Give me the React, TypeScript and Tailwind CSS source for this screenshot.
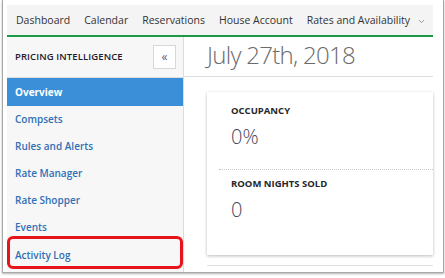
import React from 'react';
import { ChevronDown } from 'lucide-react';

const NAV = ['Dashboard', 'Calendar', 'Reservations', 'House Account'];
const MENU = ['Compsets', 'Rules and Alerts', 'Rate Manager', 'Rate Shopper', 'Events'];

const Stat: React.FC<{ label: string; value: string; dotted?: boolean }> = ({ label, value, dotted }) => (
  <div className={`ml-[12px] pl-[12px] h-[77px] ${dotted ? 'border-t border-dotted border-[#c8c8c8]' : ''}`}>
    <div className={`${dotted ? 'pt-[7px]' : 'pt-[12px]'} text-[9.5px] font-bold text-[#262626] leading-[14px]`}>{label}</div>
    <div className="mt-[6px] text-[20px] font-light text-[#48465a] leading-[26px]">{value}</div>
  </div>
);

const App: React.FC = () => {
  return (
    <div className="w-[445px] h-[278px] bg-white overflow-hidden font-['Open_Sans',sans-serif]">
      <div className="ml-[2px] w-[442px] h-[273px] border-l border-r border-b border-[#a8a8a8] shadow-[0_1px_2px_rgba(0,0,0,0.3)] pt-[5px] pl-[4px] pr-[10px] flex flex-col overflow-hidden">
        {/* top nav */}
        <div className="h-[32px] bg-[#f4f4f4] border-b-[2px] border-[#1d9a48] flex items-center pl-[9px] pt-[2px] gap-[14px] text-[10.5px] text-[#333] whitespace-nowrap shrink-0">
          {NAV.map((n) => (
            <span key={n}>{n}</span>
          ))}
          <span className="flex items-center gap-[7px]">
            Rates and Availability
            <ChevronDown className="w-[9px] h-[9px] text-[#6b7894]" strokeWidth={2} />
          </span>
        </div>

        <div className="flex flex-1 min-h-0">
          {/* sidebar */}
          <div className="w-[177px] shrink-0 bg-[#f7f7f7] border-r border-[#dcdcdc] flex flex-col">
            <div className="h-[41px] border-b border-[#dedede] flex items-center justify-between pl-[8px] pr-[7px]">
              <span className="text-[9.5px] font-semibold text-[#1f1a2e] tracking-[0.1px]">PRICING INTELLIGENCE</span>
              <div className="w-[23px] h-[24px] bg-white border border-[#d8d8d8] flex items-center justify-center text-[12px] text-[#5a5f80] leading-none">
                «
              </div>
            </div>
            <div className="h-[28px] bg-[#3a8fd8] flex items-center pl-[8px] text-[10px] font-bold text-white">Overview</div>
            {MENU.map((m) => (
              <div key={m} className="h-[27px] flex items-center pl-[8px] text-[10px] font-semibold text-[#3070b5]">
                {m}
              </div>
            ))}
            <div className="h-[33px] -mt-[5px] border-[3px] border-[#e8141b] rounded-[6px] flex items-center pt-[6px] pl-[5px] text-[10px] font-semibold text-[#3070b5]">
              Activity Log
            </div>
          </div>

          {/* main */}
          <div className="flex-1 bg-white flex flex-col">
            <div className="h-[41px] border-b border-[#dedede] flex items-center pl-[23px] pb-[3px] text-[24px] font-light text-[#6b6b6b] tracking-[-0.7px] whitespace-nowrap">
              July 27th, 2018
            </div>
            <div className="pl-[23px] pt-[15px]">
              <div className="h-[163px] bg-white shadow-[0_1px_3px_rgba(0,0,0,0.28)]">
                <Stat label="OCCUPANCY" value="0%" />
                <Stat label="ROOM NIGHTS SOLD" value="0" dotted />
              </div>
              <div className="mt-[10px] h-[10px] border-t border-[#e2e2e2]" />
            </div>
          </div>
        </div>
      </div>
    </div>
  );
};

export default App;
